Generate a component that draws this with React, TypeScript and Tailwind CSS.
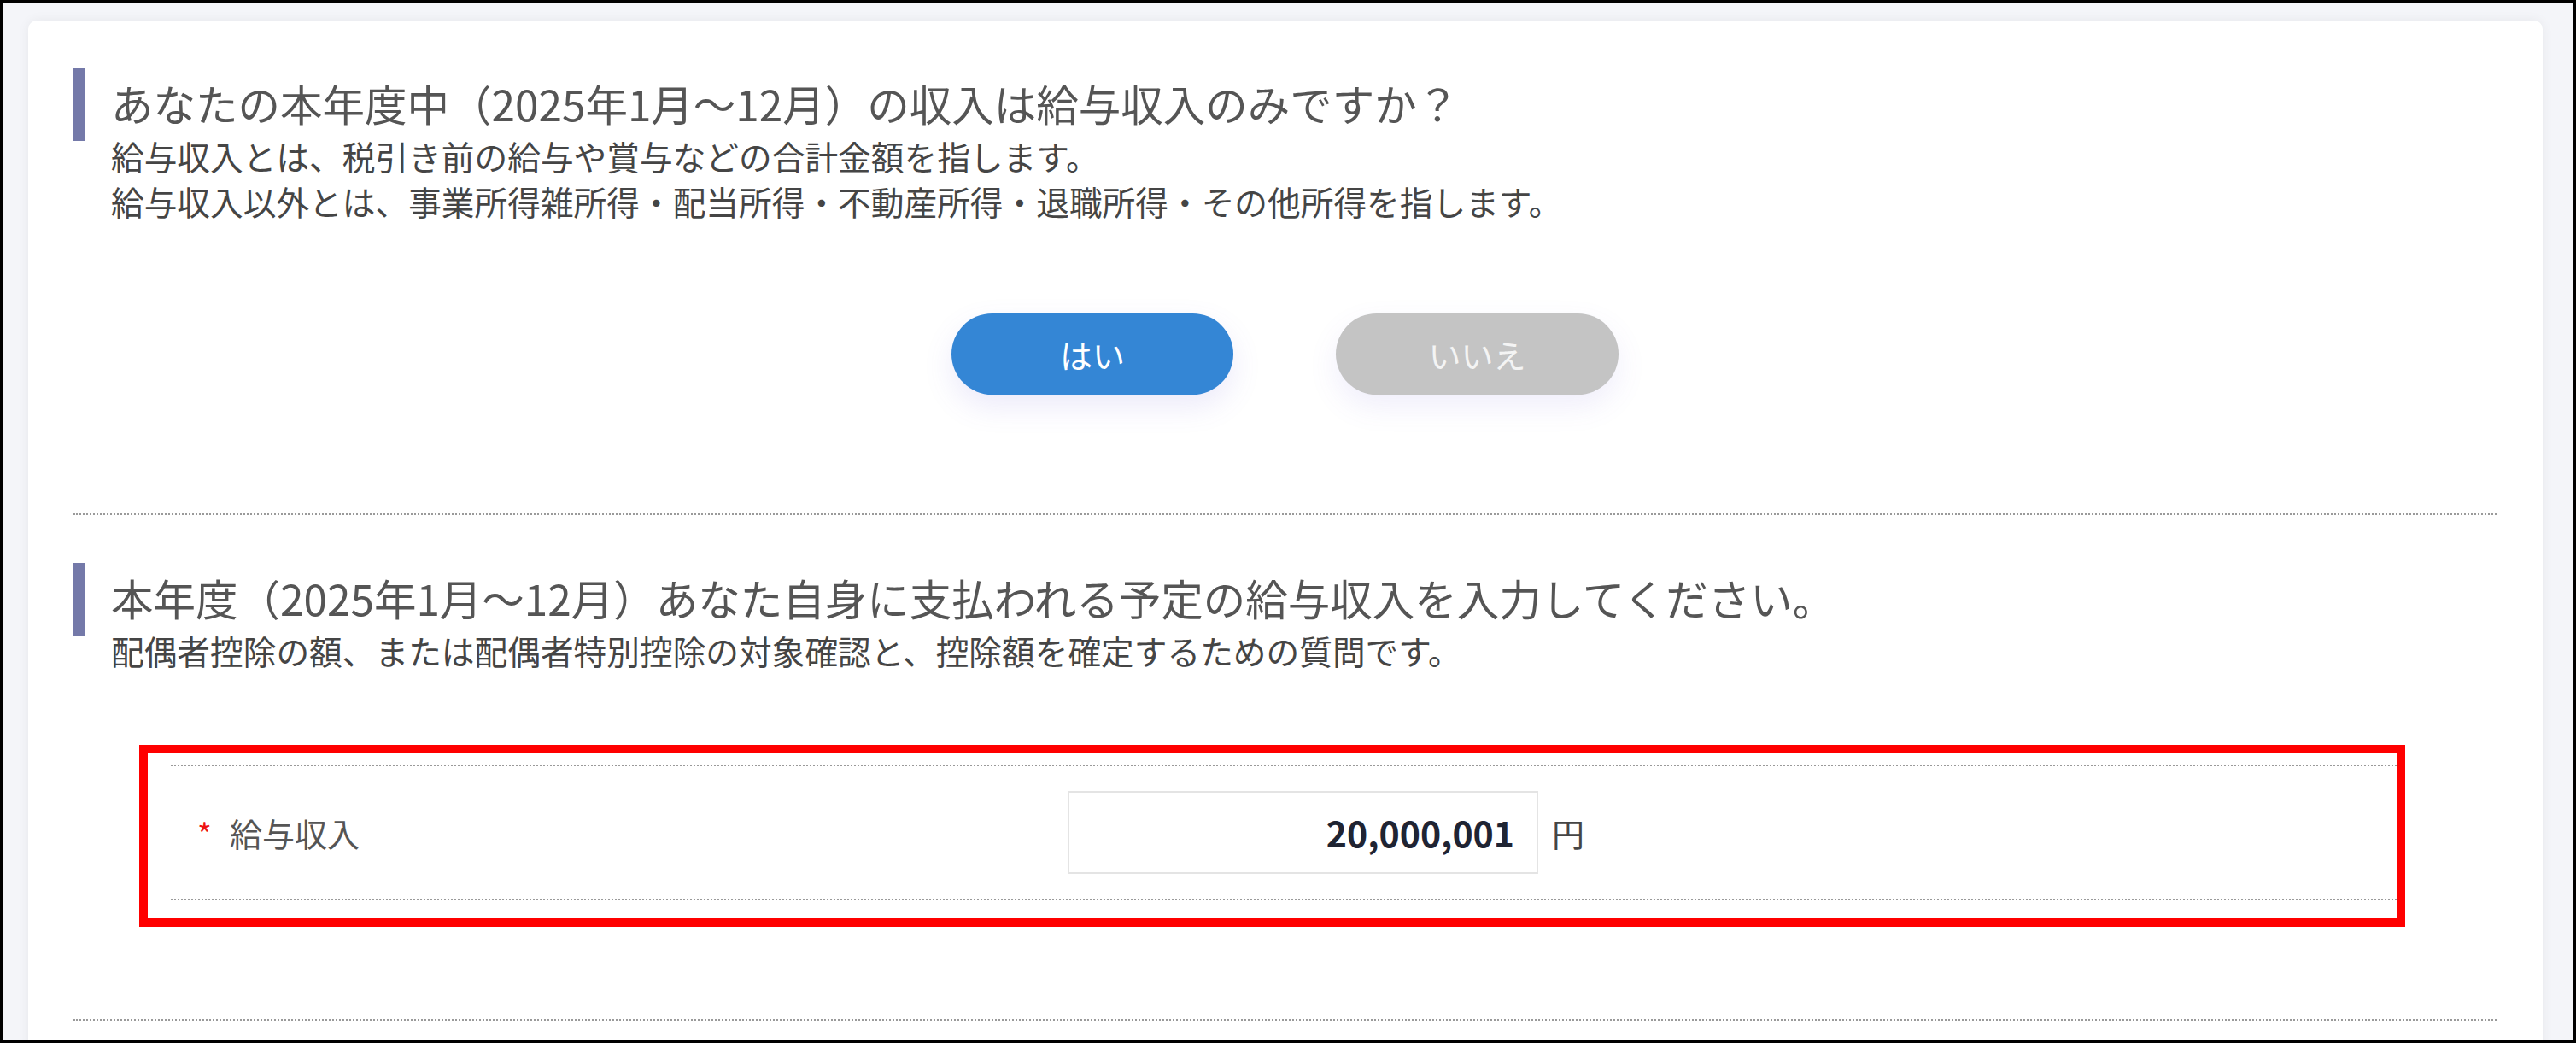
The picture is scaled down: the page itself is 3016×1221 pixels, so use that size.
import React from 'react';

const jp = { fontFamily: '"Noto Sans CJK JP", "Noto Sans", sans-serif' };

const Heading = ({ title, lines }: { title: string; lines: string[] }) => (
  <div className="flex items-start gap-[30px]">
    <div className="w-[14px] h-[85px] bg-[#7479a9] shrink-0" />
    <div className="pt-[6px]">
      <h2 className="text-[49.5px] leading-[70px] text-[#555555] font-normal whitespace-nowrap">{title}</h2>
      {lines.map((line) => (
        <p key={line} className="text-[38.7px] leading-[53px] text-[#454545] whitespace-nowrap">
          {line}
        </p>
      ))}
    </div>
  </div>
);

const Separator = () => <div className="border-t-2 border-dotted border-[#9a9a9a]" />;

export default function App() {
  return (
    <div
      className="h-[1221px] overflow-hidden border-[3px] border-black bg-[#f4f5f9] pt-[21px] pl-[30px] pr-[36px]"
      style={jp}
    >
      <div className="bg-white rounded-[10px] shadow-[0_0_14px_rgba(0,0,0,0.06)] pl-[53px] pr-[54px] pt-[56px] pb-[60px]">
        {/* Question 1 */}
        <Heading
          title="あなたの本年度中（2025年1月～12月）の収入は給与収入のみですか？"
          lines={[
            '給与収入とは、税引き前の給与や賞与などの合計金額を指します。',
            '給与収入以外とは、事業所得雑所得・配当所得・不動産所得・退職所得・その他所得を指します。',
          ]}
        />

        <div className="flex justify-center gap-[120px] mt-[105px] mb-[139px]">
          <button className="w-[330px] h-[95px] rounded-full bg-[#3486d5] text-white text-[38px] font-normal shadow-[0_14px_34px_rgba(110,90,220,0.13)]">
            はい
          </button>
          <button className="w-[331px] h-[95px] rounded-full bg-[#c4c4c4] text-[#f4f4f4] text-[38px] font-normal shadow-[0_14px_34px_rgba(110,90,220,0.10)]">
            いいえ
          </button>
        </div>

        <Separator />

        {/* Question 2 */}
        <div className="pt-[56px]">
          <Heading
            title="本年度（2025年1月～12月）あなた自身に支払われる予定の給与収入を入力してください。"
            lines={['配偶者控除の額、または配偶者特別控除の対象確認と、控除額を確定するための質問です。']}
          />
        </div>

        <div className="mt-[84px] ml-[77px] mr-[107px] border-[10px] border-[#ff0000] pl-[27px] pt-[13px] pb-[21px]">
          <Separator />
          <div className="flex items-center pl-[31px] py-[29px]">
            <div className="w-[1019px] flex items-center">
              <span className="text-[36px] leading-none text-[#ee1111] w-[38px]">*</span>
              <span className="text-[38px] text-[#555555]">給与収入</span>
            </div>
            <div className="w-[551px] h-[97px] border-2 border-[#e4e4e4] bg-white flex items-center justify-end pr-[26px]">
              <span className="text-[41px] font-semibold text-[#1f2433]">20,000,001</span>
            </div>
            <span className="ml-[16px] text-[38px] text-[#454545]">円</span>
          </div>
          <Separator />
        </div>

        <div className="mt-[108px]">
          <Separator />
        </div>
      </div>
    </div>
  );
}
